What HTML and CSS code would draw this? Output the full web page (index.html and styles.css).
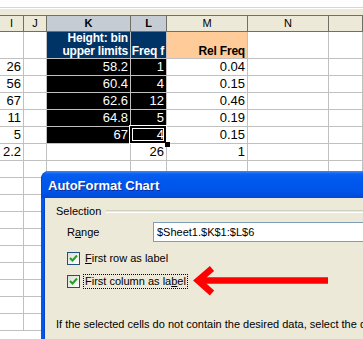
FILE: index.html
```html
<!DOCTYPE html>
<html lang="en">
<head>
  <meta charset="UTF-8">
  <title>AutoFormat Chart</title>
  <link rel="stylesheet" href="styles.css">
</head>
<body>
  <div class="sheet">
    <div class="toolbar"></div>
    <div class="row colheads">
      <div>I</div><div>J</div><div class="sel">K</div><div class="sel">L</div><div>M</div><div>N</div><div></div>
    </div>
    <div class="row tall">
      <div></div><div></div>
      <div class="navy">Height: bin<br>upper limits</div>
      <div class="navy low">Freq f</div>
      <div class="peach low">Rel Freq</div>
      <div></div><div></div>
    </div>
    <div class="row"><div>26</div><div></div><div class="dark">58.2</div><div class="dark">1</div><div>0.04</div><div></div><div></div></div>
    <div class="row"><div>56</div><div></div><div class="dark">60.4</div><div class="dark">4</div><div>0.15</div><div></div><div></div></div>
    <div class="row"><div>67</div><div></div><div class="dark">62.6</div><div class="dark">12</div><div>0.46</div><div></div><div></div></div>
    <div class="row"><div>11</div><div></div><div class="dark">64.8</div><div class="dark">5</div><div>0.19</div><div></div><div></div></div>
    <div class="row"><div>5</div><div></div><div class="dark">67</div><div class="dark cursor">4</div><div>0.15</div><div></div><div></div></div>
    <div class="row"><div>2.2</div><div></div><div></div><div>26</div><div>1</div><div></div><div></div></div>
    <div class="row"><div></div><div></div><div></div><div></div><div></div><div></div><div></div></div>
    <div class="row"><div></div><div></div><div></div><div></div><div></div><div></div><div></div></div>
    <div class="row"><div></div><div></div><div></div><div></div><div></div><div></div><div></div></div>
    <div class="row"><div></div><div></div><div></div><div></div><div></div><div></div><div></div></div>
    <div class="row"><div></div><div></div><div></div><div></div><div></div><div></div><div></div></div>
    <div class="row"><div></div><div></div><div></div><div></div><div></div><div></div><div></div></div>
    <div class="row"><div></div><div></div><div></div><div></div><div></div><div></div><div></div></div>
    <div class="row"><div></div><div></div><div></div><div></div><div></div><div></div><div></div></div>
    <div class="row"><div></div><div></div><div></div><div></div><div></div><div></div><div></div></div>
    <div class="row"><div></div><div></div><div></div><div></div><div></div><div></div><div></div></div>
  </div>

  <div class="dialog">
    <div class="titlebar">AutoFormat Chart</div>
    <div class="dialog-body">
      <div class="group-title"><span>Selection</span></div>
      <div class="range-row">
        <span class="range-label">R<u>a</u>nge</span>
        <div class="range-input">$Sheet1.$K$1:$L$6</div>
      </div>
      <div class="check-row">
        <span class="check"><svg width="11" height="11" viewBox="0 0 11 11"><polyline points="2,5 4.5,7.5 9,2.5" /></svg></span>
        <span class="check-label"><u>F</u>irst row as label</span>
      </div>
      <div class="check-row">
        <span class="check"><svg width="11" height="11" viewBox="0 0 11 11"><polyline points="2,5 4.5,7.5 9,2.5" /></svg></span>
        <span class="check-label focus">First column as la<u>b</u>el</span>
      </div>
      <p class="hint">If the selected cells do not contain the desired data, select the desired range.</p>
    </div>
  </div>

  <svg class="arrow" width="363" height="339" viewBox="0 0 363 339">
    <line x1="200" y1="280.5" x2="328" y2="280.5" />
    <polyline points="212,268.5 198,280.5 212,293" />
  </svg>
</body>
</html>
```

FILE: styles.css
```css
body {
  margin: 0;
  width: 363px;
  height: 339px;
  overflow: hidden;
  position: relative;
  background: #fff;
  font-family: "Liberation Sans", Arial, sans-serif;
}
.sheet {
  height: 339px;
  overflow: hidden;
}
.toolbar {
  height: 15px;
  border-bottom: 1px solid #716f64;
  background: linear-gradient(#fff 0, #fff 7px, #d6d6d6 7px, #d6d6d6 8px, #fff 8px, #fff 9px, #ece9d8 9px);
}
.row {
  display: grid;
  grid-template-columns: 24px 23px 84px 36px 81px 81px 1fr;
  height: 17px;
}
.row > div {
  box-sizing: border-box;
  border-right: 1px solid #c0c0c0;
  border-bottom: 1px solid #c0c0c0;
  padding-right: 2px;
  text-align: right;
  font-size: 13px;
  line-height: 16px;
  white-space: nowrap;
  overflow: hidden;
}
.colheads {
  height: 16px;
}
.colheads > div {
  background: #ece9d8;
  border-right-color: #716f64;
  border-bottom-color: #716f64;
  text-align: center;
  padding: 0;
  font-size: 11px;
  line-height: 15px;
}
.colheads > .sel {
  background: #c5ccd4;
  font-weight: bold;
}
.tall {
  height: 27px;
}
.tall > div {
  font-size: 12px;
  line-height: 13px;
  font-weight: bold;
  letter-spacing: -0.2px;
}
.tall > .low {
  padding-top: 13px;
}
.navy {
  background: #003366;
  color: #fff;
}
.peach {
  background: #ffcc99;
  color: #000;
}
.dark {
  background: #000;
  color: #fff;
}
.row > .cursor {
  position: relative;
  overflow: visible;
}
.cursor::before {
  content: "";
  position: absolute;
  left: -2px;
  top: -2px;
  right: -1px;
  bottom: -1px;
  border: 1px solid #fff;
  box-shadow: inset 0 0 0 2px #000, inset 0 0 0 3px #fff;
}
.cursor::after {
  content: "";
  position: absolute;
  right: -4px;
  bottom: -4px;
  width: 5px;
  height: 5px;
  background: #000;
}

.dialog {
  position: absolute;
  left: 41px;
  top: 171px;
  right: 0;
  bottom: 0;
  overflow: hidden;
  font-size: 11px;
  color: #000;
  display: flex;
  flex-direction: column;
}
.titlebar {
  height: 27px;
  flex: none;
  box-sizing: border-box;
  padding-left: 7px;
  border-radius: 8px 0 0 0;
  background: linear-gradient(#3c8cf8 0, #0a5ef0 3px, #0058ee 10px, #0055e8 20px, #0047d6 27px);
  color: #fff;
  font-size: 13px;
  font-weight: bold;
  line-height: 29px;
  text-shadow: 1px 1px 0 #0a2a9a;
  box-shadow: inset 1px 0 0 #1247c0;
}
.dialog-body {
  flex: 1;
  background: #ece9d8;
  border-left: 3px solid #0058ee;
  box-shadow: inset 1px 0 0 #0846c8, -1px 0 0 #002a9e;
  padding: 7px 0 0 12px;
}
.group-title {
  display: flex;
  align-items: center;
  gap: 5px;
  line-height: 13px;
}
.group-title::after {
  content: "";
  flex: 1;
  height: 1px;
  border-top: 1px solid #d0d0bf;
  border-bottom: 1px solid #fff;
  margin-top: -1px;
}
.range-row {
  display: flex;
  align-items: center;
  margin-top: 4px;
  margin-right: -10px;
  padding-left: 11px;
}
.range-label {
  width: 86px;
}
.range-input {
  flex: 1;
  height: 20px;
  box-sizing: border-box;
  border: 1px solid #7f9db9;
  background: #fff;
  padding-left: 3px;
  line-height: 18px;
}
.check-row {
  display: flex;
  align-items: center;
  gap: 3px;
  margin-top: 10px;
  padding-left: 11px;
  height: 13px;
}
.check {
  width: 13px;
  height: 13px;
  box-sizing: border-box;
  border: 1px solid #1c5180;
  background: linear-gradient(135deg, #dcdcd7, #fff);
  display: flex;
}
.check polyline {
  fill: none;
  stroke: #21a121;
  stroke-width: 2;
}
.check-label {
  line-height: 13px;
  padding: 0 1px;
  border: 1px dotted transparent;
}
.check-label.focus {
  border-color: #000;
}
.hint {
  margin: 30px 0 0;
  line-height: 13px;
  white-space: nowrap;
}
.arrow {
  position: absolute;
  left: 0;
  top: 0;
  pointer-events: none;
}
.arrow line,
.arrow polyline {
  fill: none;
  stroke: #ff0000;
  stroke-width: 6.5;
}
```
